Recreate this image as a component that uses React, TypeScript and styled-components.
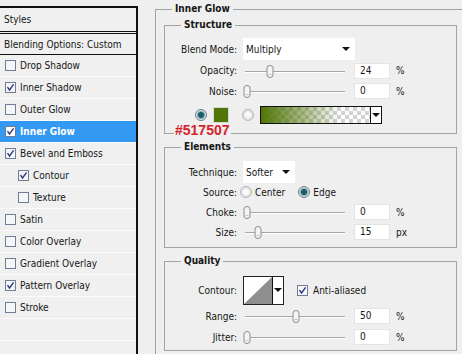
import React from 'react'
import styled, { createGlobalStyle } from 'styled-components'

const GlobalStyle = createGlobalStyle`
  html, body {
    margin: 0;
    padding: 0;
    background: #efefef;
  }
  body {
    font-family: "DejaVu Sans Condensed", "DejaVu Sans", sans-serif;
    font-stretch: condensed;
    font-size: 10px;
    color: #161616;
    overflow: hidden;
  }
`

const Page = styled.div`
  display: flex;
  align-items: flex-start;
  width: 462px;
  height: 354px;
  overflow: hidden;
  background: #efefef;
`

// Styles list
const StylesPanel = styled.div`
  flex: none;
  width: 136px;
  height: 348px;
  margin-top: 6px;
  border-top: 2px solid #111;
  border-right: 2px solid #111;
  background: #f0f0f0;
  display: flex;
  flex-direction: column;
`

const PanelHeader = styled.div`
  height: 23px;
  padding-left: 4px;
  display: flex;
  align-items: center;
  border-bottom: 1px solid #111;
`

const PanelSub = styled(PanelHeader)`
  height: 20px;
  margin-top: 1px;
  border-top: 1px solid #111;
`

const StyleRow = styled.div<{ $indent?: boolean; $selected?: boolean }>`
  height: 21px;
  flex: none;
  display: flex;
  align-items: center;
  gap: 4px;
  padding-left: ${({ $indent }) => ($indent ? 18 : 5)}px;
  border-bottom: 1px solid #fbfbfb;
  background: ${({ $selected }) => ($selected ? '#3399f3' : 'transparent')};
  color: ${({ $selected }) => ($selected ? '#fff' : '#161616')};
  font-weight: ${({ $selected }) => ($selected ? 'bold' : 'normal')};
`

// Effect panel
const Effect = styled.fieldset`
  flex: none;
  width: 320px;
  height: 370px;
  min-width: 0;
  margin: 3px 0 0 17px;
  padding: 0;
  border: 1px solid #a3a3a3;
`

const Legend = styled.legend`
  margin-left: 16px;
  padding: 0 3px;
  font-weight: bold;
  line-height: 12px;
`

const Group = styled.fieldset<{ $top: number }>`
  position: relative;
  width: 293px;
  min-width: 0;
  box-sizing: border-box;
  margin: ${({ $top }) => $top}px 0 0 8px;
  padding: 0;
  border: 1px solid #a3a3a3;
`

const GroupBody = styled.div<{ $pt: number; $pb: number }>`
  display: flex;
  flex-direction: column;
  padding: ${({ $pt, $pb }) => `${$pt}px 0 ${$pb}px 0`};
`

const FormRow = styled.div<{ $h: number }>`
  height: ${({ $h }) => $h}px;
  display: grid;
  grid-template-columns: 72px 1fr;
  column-gap: 6px;
  align-items: center;
`

const Label = styled.span`
  text-align: right;
  white-space: nowrap;
`

const Controls = styled.div<{ $shift?: number }>`
  display: flex;
  align-items: center;
  height: 100%;
  margin-left: ${({ $shift }) => $shift ?? 0}px;
`

const Select = styled.div<{ $w: number }>`
  width: ${({ $w }) => $w}px;
  height: 22px;
  box-sizing: border-box;
  padding: 0 5px 0 3px;
  background: #fff;
  display: flex;
  align-items: center;
  justify-content: space-between;
`

const Arrow = styled.span`
  width: 0;
  height: 0;
  border-left: 4px solid transparent;
  border-right: 4px solid transparent;
  border-top: 4px solid #111;
`

const Slider = styled.div`
  position: relative;
  width: 100px;
  height: 14px;
  margin-left: 2px;

  &::before {
    content: '';
    position: absolute;
    left: 0;
    right: 0;
    top: 7px;
    height: 1px;
    background: #a6a6a6;
    box-shadow: 0 1px 0 #fff;
  }
`

const ThumbMark = styled.svg<{ $pos: number }>`
  position: absolute;
  top: 1px;
  left: ${({ $pos }) => $pos - 4}px;
`

const NumberBox = styled.div`
  width: 36px;
  height: 16px;
  margin-left: 9px;
  box-sizing: border-box;
  padding-left: 5px;
  line-height: 14px;
  background: #fff;
  border: 1px solid #e4e4e4;
`

const Unit = styled.span`
  margin-left: 6px;
`

const Radio = styled.span<{ $on?: boolean }>`
  flex: none;
  width: 12px;
  height: 12px;
  box-sizing: border-box;
  border-radius: 50%;
  border: 1px solid ${({ $on }) => ($on ? '#6d7f86' : '#b8b8b8')};
  background: ${({ $on }) =>
    $on
      ? 'radial-gradient(circle, #1f5f6c 0 2.6px, #6fa3ab 3.4px, #d9e0e2 4.4px)'
      : 'radial-gradient(circle, #fafafa 0 2px, #dcdcdc 5px)'};
`

const ColorRow = styled.div`
  position: relative;
  height: 28px;
  display: flex;
  align-items: center;
  padding-left: 30px;
`

const Swatch = styled.span`
  width: 16px;
  height: 16px;
  margin: 0 13px 0 6px;
  box-sizing: border-box;
  background: #517507;
  border: 1px solid #d8d8d8;
`

const GradientBar = styled.div`
  width: 122px;
  height: 18px;
  margin-left: 6px;
  box-sizing: border-box;
  border: 1px solid #111;
  display: flex;
`

const GradientFill = styled.div`
  flex: 1;
  background:
    linear-gradient(to right, #517507 0%, rgba(81, 117, 7, 0.5) 38%, rgba(81, 117, 7, 0) 72%),
    repeating-conic-gradient(#d2d2d2 0 25%, #ffffff 0 50%) 0 0 / 8px 8px;
`

const DropButton = styled.div`
  width: 10px;
  border-left: 1px solid #111;
  background: #fff;
  display: flex;
  align-items: center;
  justify-content: center;
`

const HexNote = styled.span`
  position: absolute;
  left: 9px;
  top: 23px;
  padding: 0 1px;
  background: #efefef;
  color: #d4232c;
  font-family: "Liberation Sans", Arial, sans-serif;
  font-stretch: normal;
  font-weight: bold;
  font-size: 14px;
  line-height: 13px;
`

const RadioText = styled.span<{ $gap: number }>`
  margin: 0 ${({ $gap }) => $gap}px 0 3px;
`

const ContourBox = styled.div`
  width: 41px;
  height: 29px;
  margin-right: 13px;
  box-sizing: border-box;
  border: 1px solid #222;
  background: #fff;
  display: flex;
`

const ContourPreview = styled.svg`
  flex: 1;
  display: block;
`

const CheckLabel = styled.span`
  margin-left: 5px;
`

function Check({ on, light }: { on?: boolean; light?: boolean }) {
  return (
    <svg width="11" height="11" viewBox="0 0 11 11" style={{ flex: 'none' }}>
      <rect x="0.5" y="0.5" width="10" height="10" fill={light ? '#ffffff' : '#f6f6f6'} stroke="#6f7d96" />
      {on && <path d="M2.5 5.2 L4.5 8 L8.6 2.4" fill="none" stroke="#2c3a80" strokeWidth="1.4" />}
    </svg>
  )
}

function Range({ pos, value, unit = '%' }: { pos: number; value: string; unit?: string }) {
  return (
    <Controls>
      <Slider>
        <ThumbMark $pos={pos} width="8" height="13" viewBox="0 0 8 13">
          <path d="M1 3 Q1 0.5 4 0.5 Q7 0.5 7 3 V10 Q7 12.5 4 12.5 Q1 12.5 1 10 Z" fill="#f4f4f4" stroke="#8e8e8e" />
          <path d="M2.5 9.5 H5.5" stroke="#c4c4c4" />
        </ThumbMark>
      </Slider>
      <NumberBox>{value}</NumberBox>
      <Unit>{unit}</Unit>
    </Controls>
  )
}

const styleItems: { name: string; on?: boolean; indent?: boolean; selected?: boolean }[] = [
  { name: 'Drop Shadow' },
  { name: 'Inner Shadow', on: true },
  { name: 'Outer Glow' },
  { name: 'Inner Glow', on: true, selected: true },
  { name: 'Bevel and Emboss', on: true },
  { name: 'Contour', on: true, indent: true },
  { name: 'Texture', indent: true },
  { name: 'Satin' },
  { name: 'Color Overlay' },
  { name: 'Gradient Overlay' },
  { name: 'Pattern Overlay', on: true },
  { name: 'Stroke' },
]

export default function App() {
  return (
    <Page>
      <GlobalStyle />
      <StylesPanel>
        <PanelHeader>Styles</PanelHeader>
        <PanelSub>Blending Options: Custom</PanelSub>
        {styleItems.map((item) => (
          <StyleRow key={item.name} $indent={item.indent} $selected={item.selected}>
            <Check on={item.on} light={item.selected} />
            {item.name}
          </StyleRow>
        ))}
        <StyleRow />
      </StylesPanel>

      <Effect>
        <Legend>Inner Glow</Legend>

        <Group $top={4}>
          <Legend>Structure</Legend>
          <GroupBody $pt={7} $pb={4}>
            <FormRow $h={22}>
              <Label>Blend Mode:</Label>
              <Select $w={112}>
                Multiply
                <Arrow />
              </Select>
            </FormRow>
            <FormRow $h={21}>
              <Label>Opacity:</Label>
              <Range pos={25} value="24" />
            </FormRow>
            <FormRow $h={20}>
              <Label>Noise:</Label>
              <Range pos={2} value="0" />
            </FormRow>
            <ColorRow>
              <Radio $on />
              <Swatch />
              <Radio />
              <GradientBar>
                <GradientFill />
                <DropButton>
                  <Arrow />
                </DropButton>
              </GradientBar>
              <HexNote>#517507</HexNote>
            </ColorRow>
          </GroupBody>
        </Group>

        <Group $top={7}>
          <Legend>Elements</Legend>
          <GroupBody $pt={8} $pb={5}>
            <FormRow $h={21}>
              <Label>Technique:</Label>
              <Select $w={52}>
                Softer
                <Arrow />
              </Select>
            </FormRow>
            <FormRow $h={20}>
              <Label>Source:</Label>
              <Controls $shift={-3}>
                <Radio />
                <RadioText $gap={13}>Center</RadioText>
                <Radio $on />
                <RadioText $gap={0}>Edge</RadioText>
              </Controls>
            </FormRow>
            <FormRow $h={20}>
              <Label>Choke:</Label>
              <Range pos={2} value="0" />
            </FormRow>
            <FormRow $h={20}>
              <Label>Size:</Label>
              <Range pos={13} value="15" unit="px" />
            </FormRow>
          </GroupBody>
        </Group>

        <Group $top={7}>
          <Legend>Quality</Legend>
          <GroupBody $pt={8} $pb={3}>
            <FormRow $h={30}>
              <Label>Contour:</Label>
              <Controls>
                <ContourBox>
                  <ContourPreview viewBox="0 0 30 27" preserveAspectRatio="none">
                    <polygon points="0,27 30,0 30,27" fill="#8e8e8e" />
                  </ContourPreview>
                  <DropButton>
                    <Arrow />
                  </DropButton>
                </ContourBox>
                <Check on />
                <CheckLabel>Anti-aliased</CheckLabel>
              </Controls>
            </FormRow>
            <FormRow $h={22}>
              <Label>Range:</Label>
              <Range pos={51} value="50" />
            </FormRow>
            <FormRow $h={20}>
              <Label>Jitter:</Label>
              <Range pos={2} value="0" />
            </FormRow>
          </GroupBody>
        </Group>
      </Effect>
    </Page>
  )
}
